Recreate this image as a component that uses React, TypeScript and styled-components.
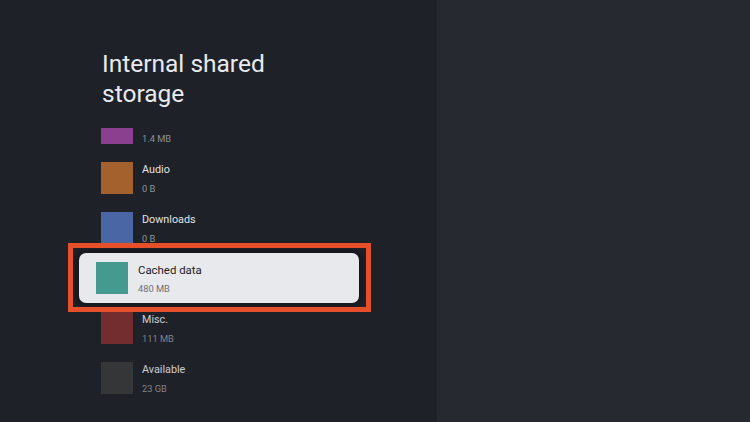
import React from "react";
import styled, { createGlobalStyle } from "styled-components";

const GlobalStyle = createGlobalStyle`
  html, body {
    margin: 0;
    padding: 0;
    background: #1e2128;
  }
  * { box-sizing: border-box; }
`;

const Screen = styled.div`
  display: flex;
  width: 750px;
  height: 422px;
  overflow: hidden;
  font-family: Roboto, "Noto Sans", "Liberation Sans", sans-serif;
`;

const LeftPane = styled.div`
  width: 437px;
  height: 100%;
  background: #1e2128;
  display: flex;
  flex-direction: column;
  padding-top: 49px;
`;

const RightPane = styled.div`
  flex: 1;
  height: 100%;
  background: #262930;
`;

const Title = styled.h1`
  margin: 0 0 0 102px;
  font-size: 24.5px;
  line-height: 30px;
  font-weight: 400;
  color: #e9eaee;
  width: 200px;
`;

const ListViewport = styled.div`
  margin-top: 19px;
  flex: 1;
  overflow: hidden;
  padding-left: 101px;
`;

const ListInner = styled.div`
  margin-top: -25px;
  display: flex;
  flex-direction: column;
`;

const Row = styled.div<{ $dim?: boolean }>`
  display: flex;
  align-items: center;
  gap: 9px;
  height: 50px;
  opacity: ${(p) => (p.$dim ? 0.88 : 1)};
`;

const FocusedRow = styled.div`
  position: relative;
  display: flex;
  align-items: center;
  gap: 10px;
  height: 50px;
  width: 280px;
  margin-left: -22px;
  padding-left: 17px;
  background: #e8e9ed;
  border-radius: 7px;
  box-shadow: 0 0 5px 4px rgba(0, 0, 0, 0.28);
`;

const Highlight = styled.div`
  position: absolute;
  top: -10px;
  left: -11px;
  right: -12px;
  bottom: -9px;
  border: 5px solid #e5502b;
  pointer-events: none;
`;

const Swatch = styled.div<{ $color: string }>`
  width: 32px;
  height: 32px;
  flex: none;
  background: ${(p) => p.$color};
`;

const TextCol = styled.div`
  display: flex;
  flex-direction: column;
  gap: 6px;
  padding-top: 1px;
`;

const ItemTitle = styled.div<{ $focused?: boolean }>`
  font-size: ${(p) => (p.$focused ? "11.4px" : "10.8px")};
  line-height: 14px;
  height: 14px;
  color: ${(p) => (p.$focused ? "#202124" : "#e2e3e6")};
`;

const ItemSize = styled.div<{ $focused?: boolean }>`
  font-size: 9.3px;
  line-height: 12px;
  color: ${(p) => (p.$focused ? "#6d7076" : "#8e9197")};
`;

type Item = { name: string; size: string; color: string; focused?: boolean; dim?: boolean };

const items: Item[] = [
  { name: "", size: "1.4 MB", color: "#8b3f8f" },
  { name: "Audio", size: "0 B", color: "#a4602d" },
  { name: "Downloads", size: "0 B", color: "#4a66a4" },
  { name: "Cached data", size: "480 MB", color: "#459a90", focused: true },
  { name: "Misc.", size: "111 MB", color: "#7f2f31", dim: true },
  { name: "Available", size: "23 GB", color: "#39393b", dim: true },
];

export default function App() {
  return (
    <>
      <GlobalStyle />
      <Screen>
        <LeftPane>
          <Title>Internal shared storage</Title>
          <ListViewport>
            <ListInner>
              {items.map((it) =>
                it.focused ? (
                  <FocusedRow key={it.size}>
                    <Swatch $color={it.color} />
                    <TextCol>
                      <ItemTitle $focused>{it.name}</ItemTitle>
                      <ItemSize $focused>{it.size}</ItemSize>
                    </TextCol>
                    <Highlight />
                  </FocusedRow>
                ) : (
                  <Row key={it.size + it.name} $dim={it.dim}>
                    <Swatch $color={it.color} />
                    <TextCol>
                      <ItemTitle>{it.name}</ItemTitle>
                      <ItemSize>{it.size}</ItemSize>
                    </TextCol>
                  </Row>
                )
              )}
            </ListInner>
          </ListViewport>
        </LeftPane>
        <RightPane />
      </Screen>
    </>
  );
}
